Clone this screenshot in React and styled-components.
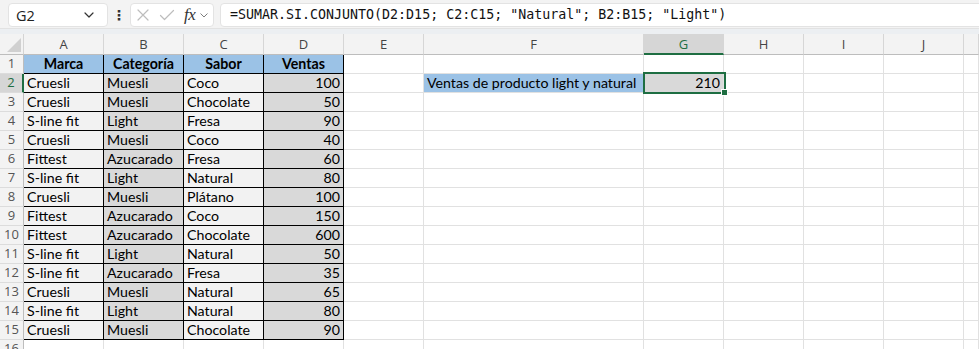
import React from "react";
import styled, { createGlobalStyle } from "styled-components";

const Global = createGlobalStyle`
  html, body { margin: 0; padding: 0; background: #ffffff; }
  body { width: 979px; height: 349px; overflow: hidden; font-family: "Lato", "Liberation Sans", sans-serif; }
`;

const Page = styled.div`
  width: 979px;
  height: 349px;
  overflow: hidden;
  background: #ffffff;
`;

const FormulaBar = styled.div`
  display: flex;
  align-items: center;
  height: 28px;
  box-sizing: border-box;
  padding: 3px 0 1px 8px;
  background: #f3f3f3;
`;

const NameBox = styled.div`
  width: 100px;
  height: 24px;
  box-sizing: border-box;
  border: 1px solid #e3e3e3;
  border-radius: 4px;
  background: #ffffff;
  display: flex;
  align-items: center;
  justify-content: space-between;
  padding: 0 13px 0 7px;
  font-family: "Open Sans", "Noto Sans", sans-serif;
  font-size: 14.5px;
  color: #222;
`;

const Dots = styled.div`
  width: 22px;
  display: flex;
  justify-content: center;
  font-size: 14px;
  font-weight: 700;
  color: #333;
  font-family: "DejaVu Sans", sans-serif;
`;

const FxBox = styled.div`
  width: 84px;
  height: 24px;
  box-sizing: border-box;
  border: 1px solid #e3e3e3;
  border-radius: 4px;
  background: #ffffff;
  display: flex;
  align-items: center;
  padding: 0 0 0 5px;
  gap: 5px;
`;

const Fx = styled.span`
  font-family: "Liberation Serif", "DejaVu Serif", serif;
  font-style: italic;
  font-size: 17px;
  color: #333;
  margin-left: 4px;
  letter-spacing: -0.5px;
`;

const FormulaInput = styled.div`
  flex: 1;
  margin-left: 6px;
  margin-right: -8px;
  height: 24px;
  box-sizing: border-box;
  border: 1px solid #e3e3e3;
  border-radius: 4px;
  background: #ffffff;
  padding-left: 9px;
  font-family: "DejaVu Sans Mono", "Liberation Mono", monospace;
  font-size: 13.3px;
  line-height: 22px;
  color: #111;
  white-space: pre;
  overflow: hidden;
`;

const Band = styled.div`
  height: 6px;
  background: #eceff2;
  border-top: 1px solid #e2e2e2;
  box-sizing: border-box;
`;

const Grid = styled.div`
  display: grid;
  grid-template-columns: 24px 80px 80px 80px 80px 80px 220px 80px 80px 80px 80px 15px;
  grid-auto-rows: 19px;
  grid-template-rows: 21px;
`;

const Corner = styled.div`
  background: #f3f3f3;
  border-right: 1px solid #d4d4d4;
  border-bottom: 1px solid #bdbdbd;
  box-sizing: border-box;
  display: flex;
  align-items: flex-end;
  justify-content: flex-end;
  padding: 0 2px 2px 0;
`;

const ColHead = styled.div`
  background: ${(p) => (p.$active ? "#d6d6d6" : "#f3f3f3")};
  border-right: 1px solid #d6d6d6;
  border-bottom: ${(p) => (p.$active ? "2px solid #1e6e42" : "1px solid #bdbdbd")};
  box-sizing: border-box;
  text-align: center;
  font-family: "Open Sans", "Noto Sans", sans-serif;
  font-size: 13px;
  line-height: 20px;
  color: ${(p) => (p.$active ? "#1e6e42" : "#444")};
  overflow: hidden;
`;

const RowHead = styled.div`
  background: ${(p) => (p.$active ? "#d6d6d6" : "#f3f3f3")};
  border-right: ${(p) => (p.$active ? "2px solid #1e6e42" : "1px solid #bdbdbd")};
  border-bottom: 1px solid #dcdcdc;
  box-sizing: border-box;
  text-align: center;
  font-family: "Open Sans", "Noto Sans", sans-serif;
  font-size: 13px;
  line-height: 17px;
  color: ${(p) => (p.$active ? "#1e6e42" : "#555")};
  overflow: hidden;
`;

const Cell = styled.div`
  position: relative;
  z-index: ${(p) => (p.$selected ? 2 : "auto")};
  box-sizing: border-box;
  background: ${(p) => p.$bg || "#ffffff"};
  border-right: 1px solid ${(p) => (p.$boxed ? "#000000" : "#e1e1e1")};
  border-bottom: 1px solid ${(p) => (p.$boxed ? "#000000" : "#e1e1e1")};
  font-family: "Lato", "Liberation Sans", sans-serif;
  font-size: 14.2px;
  font-weight: ${(p) => (p.$bold ? 700 : 400)};
  line-height: 17px;
  color: #000;
  text-align: ${(p) => p.$align || "left"};
  padding: 0 3px 0 3px;
  white-space: nowrap;
  overflow: ${(p) => (p.$selected ? "visible" : "hidden")};
`;

const Selection = styled.div`
  position: absolute;
  left: -1px;
  top: -2px;
  width: 83px;
  height: 22px;
  box-sizing: border-box;
  border: 2px solid #1e6e42;
  pointer-events: none;
`;

const Handle = styled.div`
  position: absolute;
  right: -4px;
  bottom: -4px;
  width: 7px;
  height: 7px;
  box-sizing: border-box;
  background: #1e6e42;
  border: 1px solid #ffffff;
`;

const BLUE = "#9bc2e6";
const LIGHT = "#f2f2f2";
const DARK = "#d9d9d9";

const data = [
  ["Cruesli", "Muesli", "Coco", 100],
  ["Cruesli", "Muesli", "Chocolate", 50],
  ["S-line fit", "Light", "Fresa", 90],
  ["Cruesli", "Muesli", "Coco", 40],
  ["Fittest", "Azucarado", "Fresa", 60],
  ["S-line fit", "Light", "Natural", 80],
  ["Cruesli", "Muesli", "Plátano", 100],
  ["Fittest", "Azucarado", "Coco", 150],
  ["Fittest", "Azucarado", "Chocolate", 600],
  ["S-line fit", "Light", "Natural", 50],
  ["S-line fit", "Azucarado", "Fresa", 35],
  ["Cruesli", "Muesli", "Natural", 65],
  ["S-line fit", "Light", "Natural", 80],
  ["Cruesli", "Muesli", "Chocolate", 90],
];

const cols = ["A", "B", "C", "D", "E", "F", "G", "H", "I", "J", ""];

const Chevron = ({ size = 10, color = "#333" }) => (
  <svg width={size} height={size * 0.6} viewBox="0 0 10 6" fill="none">
    <path d="M1 1 L5 5 L9 1" stroke={color} strokeWidth="1.2" strokeLinecap="round" strokeLinejoin="round" />
  </svg>
);

const Blanks = ({ n, from }) =>
  Array.from({ length: n }, (_, i) => <Cell key={"b" + from + i} />);

export default function App() {
  const rows = [];
  rows.push(
    <React.Fragment key="r1">
      <RowHead>1</RowHead>
      <Cell $bg={BLUE} $boxed $bold $align="center">Marca</Cell>
      <Cell $bg={BLUE} $boxed $bold $align="center">Categoría</Cell>
      <Cell $bg={BLUE} $boxed $bold $align="center">Sabor</Cell>
      <Cell $bg={BLUE} $boxed $bold $align="center">Ventas</Cell>
      <Blanks n={7} from="r1" />
    </React.Fragment>
  );
  data.forEach((d, i) => {
    const r = i + 2;
    rows.push(
      <React.Fragment key={"r" + r}>
        <RowHead $active={r === 2}>{r}</RowHead>
        <Cell $bg={LIGHT} $boxed>{d[0]}</Cell>
        <Cell $bg={DARK} $boxed>{d[1]}</Cell>
        <Cell $bg={LIGHT} $boxed>{d[2]}</Cell>
        <Cell $bg={DARK} $boxed $align="right">{d[3]}</Cell>
        <Cell />
        {r === 2 ? (
          <>
            <Cell $bg={BLUE}>Ventas de producto light y natural</Cell>
            <Cell $bg={DARK} $align="right" $selected>
              210
              <Selection>
                <Handle />
              </Selection>
            </Cell>
            <Blanks n={4} from={"r" + r} />
          </>
        ) : (
          <Blanks n={6} from={"r" + r} />
        )}
      </React.Fragment>
    );
  });
  rows.push(
    <React.Fragment key="r16">
      <RowHead>16</RowHead>
      <Blanks n={11} from="r16" />
    </React.Fragment>
  );

  return (
    <Page>
      <Global />
      <FormulaBar>
        <NameBox>
          <span>G2</span>
          <Chevron size={10} color="#333" />
        </NameBox>
        <Dots>⋮</Dots>
        <FxBox>
          <svg width="14" height="14" viewBox="0 0 14 14">
            <path d="M2 2 L12 12 M12 2 L2 12" stroke="#bdbdbd" strokeWidth="1.2" strokeLinecap="round" />
          </svg>
          <svg width="16" height="14" viewBox="0 0 16 14" style={{ marginLeft: 4 }}>
            <path d="M1.5 7.5 L5.5 11.5 L14.5 2.5" stroke="#bdbdbd" strokeWidth="1.2" fill="none" strokeLinecap="round" strokeLinejoin="round" />
          </svg>
          <Fx>fx</Fx>
          <Chevron size={8} color="#777" />
        </FxBox>
        <FormulaInput>{'=SUMAR.SI.CONJUNTO(D2:D15; C2:C15; "Natural"; B2:B15; "Light")'}</FormulaInput>
      </FormulaBar>
      <Band />
      <Grid>
        <Corner>
          <svg width="14" height="14" viewBox="0 0 14 14">
            <path d="M14 0 L14 14 L0 14 Z" fill="#d0d0d0" />
          </svg>
        </Corner>
        {cols.map((c, i) => (
          <ColHead key={"c" + i} $active={c === "G"}>{c}</ColHead>
        ))}
        {rows}
      </Grid>
    </Page>
  );
}
